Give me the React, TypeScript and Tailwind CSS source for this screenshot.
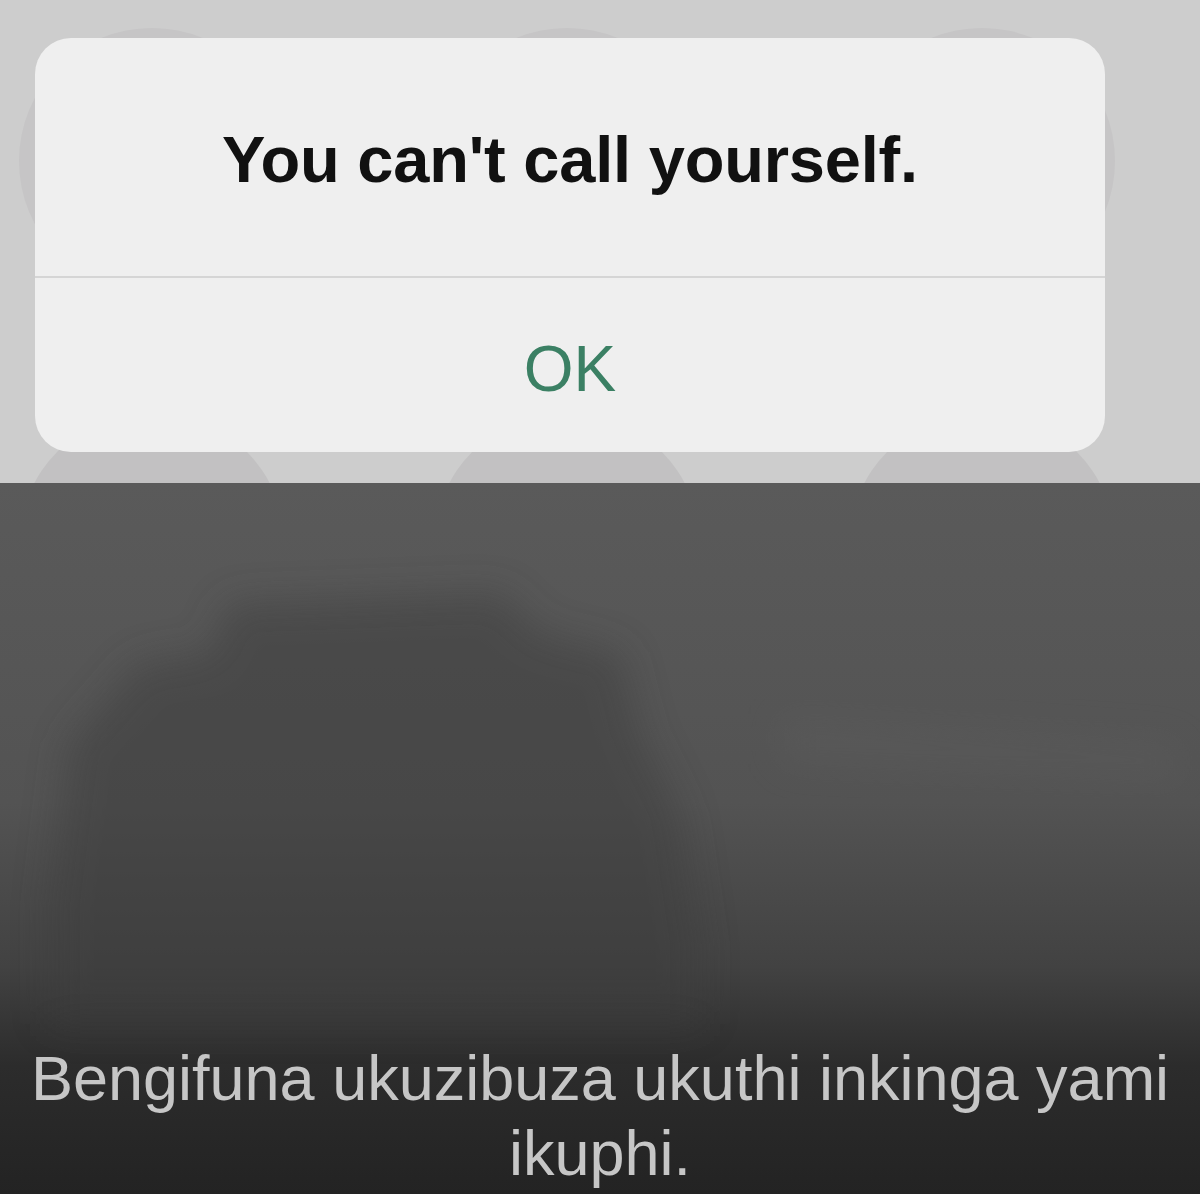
import React from 'react';

const KEYS = ['1', '2', '3', '4', '5', '6'];

function Keypad() {
  return (
    <div className="grid grid-cols-[266px_266px_266px] gap-x-[149px] gap-y-[118px] pl-[19px] pt-[28px]">
      {KEYS.map((k, i) => (
        <div
          key={k}
          className={i < 3 ? 'h-[266px] w-[266px] rounded-full bg-[#c6c5c6]' : 'h-[266px] w-[266px] rounded-full bg-[#c2c1c2]'}
        />
      ))}
    </div>
  );
}

function Alert() {
  return (
    <div className="absolute left-[35px] top-[38px] flex h-[414px] w-[1070px] flex-col overflow-hidden rounded-[36px] bg-[#efefef]">
      <div className="flex h-[238px] items-center justify-center pt-[5px]">
        <h2 className="text-[65px] font-bold leading-none tracking-[-0.2px] text-[#111]">
          You can't call yourself.
        </h2>
      </div>
      <div className="h-[2px] bg-[#d5d5d5]" />
      <button className="flex flex-1 items-center justify-center pt-[8px] text-[64px] leading-none text-[#3b8064]">
        OK
      </button>
    </div>
  );
}

// blurred frame of the video behind the caption
function Backdrop() {
  return (
    <svg className="absolute inset-0 h-full w-full" viewBox="0 0 1200 710" preserveAspectRatio="none">
      <defs>
        <linearGradient id="fade" x1="0" y1="0" x2="0" y2="1">
          <stop offset="0" stopColor="#5a5a5a" />
          <stop offset="0.45" stopColor="#535353" />
          <stop offset="0.68" stopColor="#424242" />
          <stop offset="0.82" stopColor="#2c2c2c" />
          <stop offset="1" stopColor="#232323" />
        </linearGradient>
        <filter id="soft" x="-20%" y="-20%" width="140%" height="140%">
          <feGaussianBlur stdDeviation="18" />
        </filter>
      </defs>
      <rect width="1200" height="710" fill="url(#fade)" />
      <path
        d="M230 120 L500 110 L540 150 L620 170 L640 250 L680 330 L700 460 L700 540 L50 540 L50 420 L70 260 L140 180 L210 170 Z"
        fill="#3c3e3d"
        opacity="0.5"
        filter="url(#soft)"
      />
      <path d="M780 230 L1180 260 L1180 300 L780 280 Z" fill="#606060" opacity="0.3" filter="url(#soft)" />
    </svg>
  );
}

export default function App() {
  return (
    <div className="flex h-[1194px] w-[1200px] flex-col overflow-hidden font-['Liberation_Sans',Arial,sans-serif]">
      <div className="relative h-[483px] overflow-hidden bg-[#cdcdcd]">
        <Keypad />
        <Alert />
      </div>
      <div className="relative flex flex-1 flex-col justify-end bg-[#3f3f3f]">
        <Backdrop />
        <p className="relative px-[20px] pb-[3px] text-center text-[63px] leading-[75px] text-[#c6c6c6]">
          Bengifuna ukuzibuza ukuthi inkinga yami ikuphi.
        </p>
      </div>
    </div>
  );
}
